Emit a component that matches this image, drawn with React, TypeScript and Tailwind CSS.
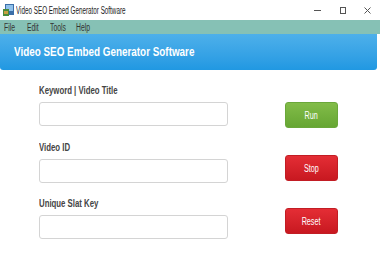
import React from "react";

const sans = "'Liberation Sans', Arial, sans-serif";

function Field({ label, mt }: { label: string; mt: string }) {
  return (
    <div className={`flex flex-col ${mt}`}>
      <div className="h-[12px] whitespace-nowrap text-[10px] font-bold leading-[12px] text-[#444]">
        <span className="inline-block origin-left scale-x-[0.78]">{label}</span>
      </div>
      <div className="mt-[5px] h-[24px] w-[189px] rounded-[3px] border border-[#d4d4d4] bg-white" />
    </div>
  );
}

function Btn({ label, color }: { label: string; color: "green" | "red" }) {
  const cls =
    color === "green"
      ? "bg-gradient-to-b from-[#82bc48] to-[#66a633] border-[#6aa73a]"
      : "bg-gradient-to-b from-[#e42d35] to-[#c81820] border-[#c21d24]";
  return (
    <div
      className={`flex h-[26px] w-[53px] items-center justify-center rounded-[3px] border text-[10px] text-white ${cls}`}
    >
      <span className="inline-block origin-center scale-x-[0.72]">{label}</span>
    </div>
  );
}

function MenuItem({ label, w }: { label: string; w: string }) {
  return (
    <div className={`${w} whitespace-nowrap`}>
      <span className="inline-block origin-left scale-x-[0.68]">{label}</span>
    </div>
  );
}

export default function App() {
  return (
    <div className="h-[265px] w-[380px] overflow-hidden bg-white" style={{ fontFamily: sans }}>
      {/* title bar */}
      <div className="flex h-[20px] items-center bg-white">
        <svg width="13" height="14" viewBox="0 0 13 14" className="ml-[2px] shrink-0">
          <rect x="3" y="1" width="9" height="11" fill="#3b6ea8" />
          <rect x="4" y="2" width="7" height="6" fill="#8fc0ea" />
          <rect x="1" y="6" width="6" height="7" fill="#4a8a3a" />
          <rect x="2" y="8" width="4" height="3" fill="#c8a040" />
        </svg>
        <div className="ml-[1px] w-[120px] whitespace-nowrap text-[10px] text-[#222]">
          <span className="inline-block origin-left scale-x-[0.63]">Video SEO Embed Generator Software</span>
        </div>
        <div className="ml-auto flex items-center">
          <div className="flex w-[25px] justify-center">
            <div className="h-px w-[7px] bg-[#555]" />
          </div>
          <div className="flex w-[25px] justify-center">
            <div className="h-[7px] w-[6px] border border-[#555]" />
          </div>
          <div className="flex w-[25px] justify-center">
            <svg width="7" height="7" viewBox="0 0 7 7">
              <path d="M0.5 0.5 L6.5 6.5 M6.5 0.5 L0.5 6.5" stroke="#555" strokeWidth="1" />
            </svg>
          </div>
        </div>
      </div>
      {/* menu bar */}
      <div className="flex h-[14px] items-center bg-[#86c1b5] pl-[4px] text-[10px] text-[#333]">
        <MenuItem label="File" w="w-[23px]" />
        <MenuItem label="Edit" w="w-[23px]" />
        <MenuItem label="Tools" w="w-[26px]" />
        <MenuItem label="Help" w="w-[20px]" />
      </div>
      {/* banner */}
      <div className="flex h-[36px] w-[377px] items-center whitespace-nowrap rounded-b-[3px] bg-gradient-to-b from-[#4db0ea] to-[#2098e2] pl-[14px]">
        <span className="inline-block origin-left scale-x-[0.76] text-[13px] font-bold text-white">
          Video SEO Embed Generator Software
        </span>
      </div>
      {/* body */}
      <div className="flex">
        <div className="ml-[39px] flex flex-col pt-[15px]">
          <Field label="Keyword | Video Title" mt="" />
          <Field label="Video ID" mt="mt-[16px]" />
          <Field label="Unique Slat Key" mt="mt-[15px]" />
        </div>
        <div className="ml-[57px] flex flex-col gap-[27px] pt-[32px]">
          <Btn label="Run" color="green" />
          <Btn label="Stop" color="red" />
          <Btn label="Reset" color="red" />
        </div>
      </div>
    </div>
  );
}
